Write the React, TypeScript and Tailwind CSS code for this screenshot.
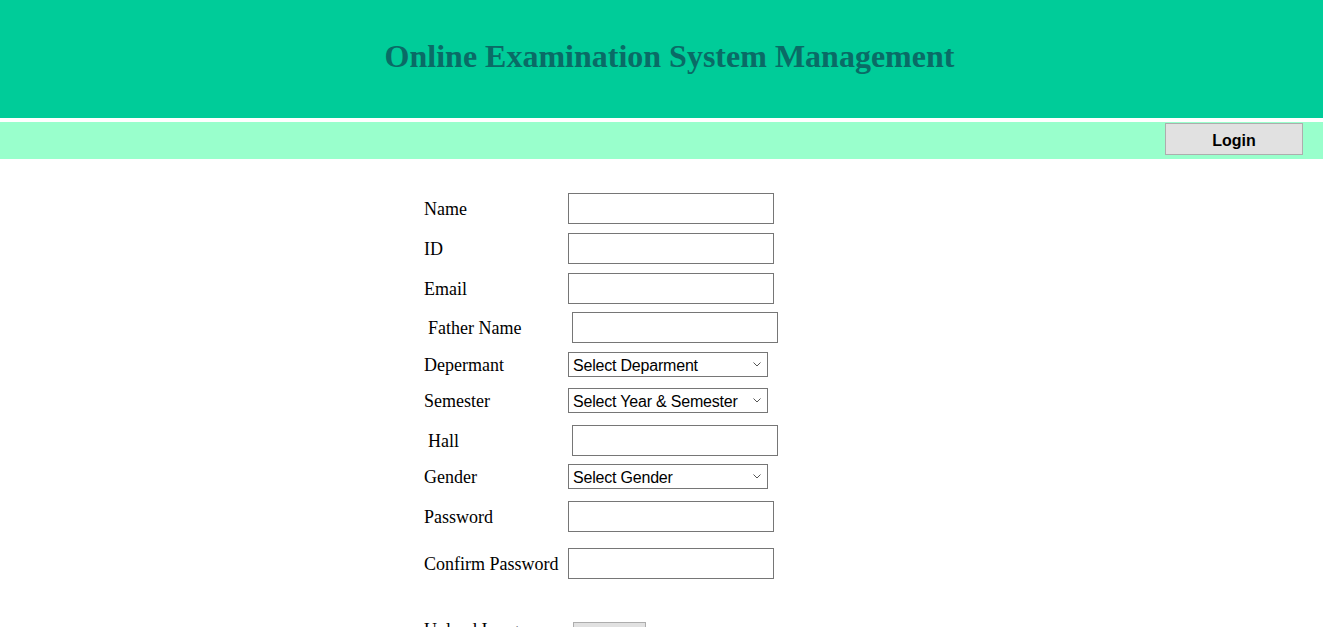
import React from "react";

const serif = "font-['Liberation_Serif','Times_New_Roman',serif]";
const sans = "font-['Liberation_Sans',Arial,sans-serif]";

function TextRow({ label, mt, indent, type = "text" }: { label: string; mt: string; indent?: boolean; type?: string }) {
  return (
    <div className={`flex h-[31px] items-center ${mt} ${indent ? "pl-1" : ""}`}>
      <label className={`w-[144px] shrink-0 pt-[2px] text-[18px] text-black ${serif}`}>{label}</label>
      <input type={type} className="h-[31px] w-[206px] border border-[#767676] bg-white outline-none" />
    </div>
  );
}

function SelectRow({ label, mt, placeholder }: { label: string; mt: string; placeholder: string }) {
  return (
    <div className={`flex h-[25px] items-center ${mt}`}>
      <label className={`w-[144px] shrink-0 pt-[2px] text-[18px] text-black ${serif}`}>{label}</label>
      <div className="relative h-[25px] w-[200px]">
        <select
          defaultValue=""
          className={`h-[25px] w-[200px] appearance-none border border-[#767676] bg-white pl-1 pt-[1px] text-[16px] tracking-[-0.2px] text-black outline-none ${sans}`}
        >
          <option value="">{placeholder}</option>
        </select>
        <svg className="pointer-events-none absolute right-[7px] top-[10px]" width="8" height="5" viewBox="0 0 8 5">
          <path d="M0.5 0.5 L4 4 L7.5 0.5" fill="none" stroke="#555" strokeWidth="1" />
        </svg>
      </div>
    </div>
  );
}

export default function App() {
  return (
    <div className="min-h-[627px] w-[1323px] bg-white">
      <header className="flex h-[118px] items-center justify-center bg-[#00CC99] pb-[6px] pl-[16px]">
        <h1 className={`text-[32px] font-bold text-[#0a6b66] ${serif}`}>Online Examination System Management</h1>
      </header>
      <div className="h-[4px] bg-white" />
      <nav className="flex h-[37px] items-start justify-end bg-[#99FFCC] pr-[20px] pt-[1px]">
        <button className={`h-[32px] w-[138px] border border-[#adadad] bg-[#e1e1e1] pt-[3px] text-[16px] font-bold text-black ${sans}`}>
          Login
        </button>
      </nav>

      <form className="pl-[424px] pt-[34px]">
        <TextRow label="Name" mt="mt-0" />
        <TextRow label="ID" mt="mt-[9px]" />
        <TextRow label="Email" mt="mt-[9px]" type="email" />
        <TextRow label="Father Name" mt="mt-[8px]" indent />
        <SelectRow label="Depermant" mt="mt-[9px]" placeholder="Select Deparment" />
        <SelectRow label="Semester" mt="mt-[11px]" placeholder="Select Year & Semester" />
        <TextRow label="Hall" mt="mt-[12px]" indent />
        <SelectRow label="Gender" mt="mt-[8px]" placeholder="Select Gender" />
        <TextRow label="Password" mt="mt-[12px]" type="password" />
        <TextRow label="Confirm Password" mt="mt-[16px]" type="password" />
        <div className="mt-[43px] flex h-[31px] items-start">
          <label className={`-mt-[5px] w-[149px] shrink-0 text-[18px] leading-[27px] text-black ${serif}`}>Upload Image</label>
          <button type="button" className={`h-[28px] w-[73px] border border-[#adadad] bg-[#e1e1e1] text-[14px] ${sans}`}>
            Browse
          </button>
        </div>
      </form>
    </div>
  );
}
